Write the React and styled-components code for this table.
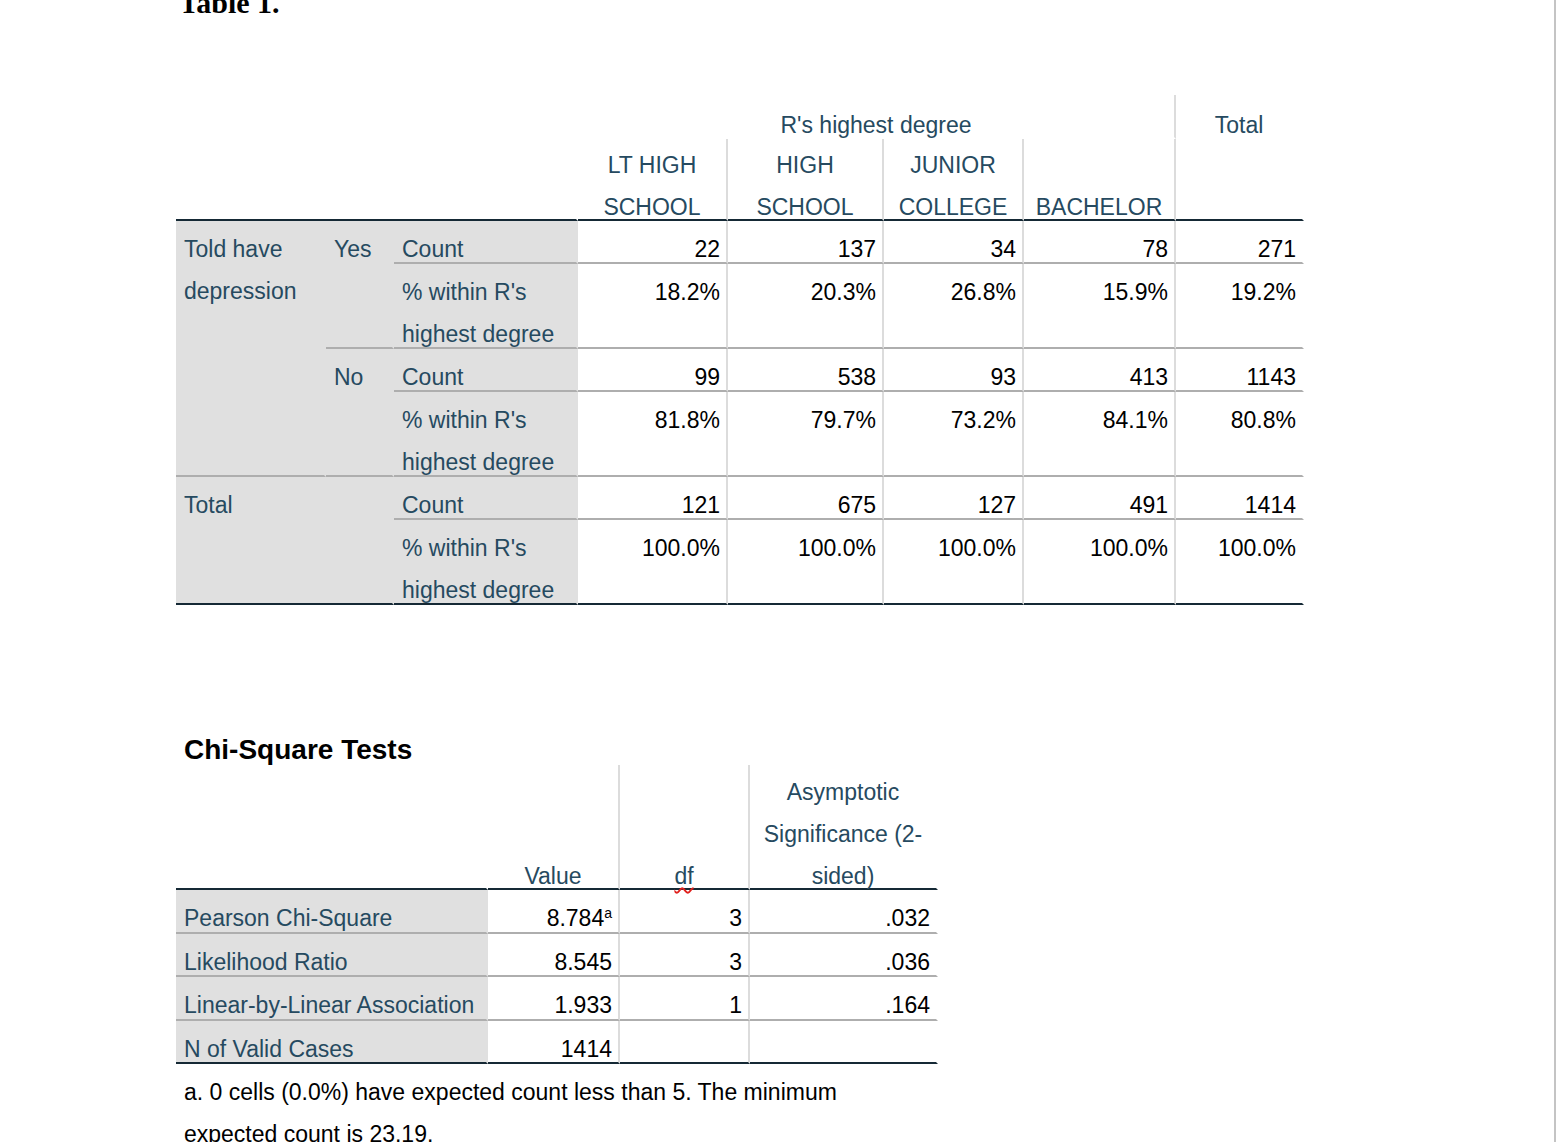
import React from "react";
import styled, { createGlobalStyle } from "styled-components";

const GlobalStyle = createGlobalStyle`
  html, body {
    margin: 0;
    background: #fff;
    overflow: hidden;
  }
`;

const rules = {
  gray: "#aeaeae",
  dark: "#152935",
};

const Page = styled.div`
  box-sizing: border-box;
  width: 1556px;
  height: 1142px;
  padding-left: 176px;
  border-right: 2px solid #c4c4c4;
  overflow: hidden;
  font-family: "Liberation Sans", Arial, sans-serif;
`;

const Caption = styled.h1`
  margin: -12px 0 0 3px;
  font: bold 30px/30px "Liberation Serif", "Times New Roman", serif;
  color: #000;
`;

const Grid = styled.div`
  display: grid;
  grid-template-columns: ${(p) => p.$cols};
  grid-template-rows: ${(p) => p.$rows};
  width: max-content;
  margin-top: ${(p) => p.$top || 0}px;
  font-size: 23px;
  line-height: 42px;
`;

const Cell = styled.div`
  grid-column: ${(p) => p.$c};
  grid-row: ${(p) => p.$r};
  box-sizing: border-box;
  min-width: 0;
  padding: 7px ${(p) => (p.$num ? "6px" : "8px")} 0 8px;
  background: ${(p) => (p.$shade ? "#e0e0e0" : "transparent")};
  border-bottom: 2px solid ${(p) => rules[p.$rule] || "transparent"};
  border-right: 2px solid ${(p) => (p.$sep ? "#dcdcdc" : "transparent")};
  color: ${(p) => (p.$num ? "#000" : "#264a60")};
  text-align: ${(p) => (p.$num ? "right" : "left")};
  white-space: ${(p) => (p.$num ? "nowrap" : "normal")};
  overflow: hidden;
`;

const HeadCell = styled(Cell)`
  display: flex;
  flex-direction: column;
  justify-content: ${(p) => (p.$bottom ? "flex-end" : "flex-start")};
  padding: 9px 8px 0;
  text-align: center;
  overflow: visible;
`;

const HeadText = styled.div`
  margin-bottom: ${(p) => (p.$bottom ? "-9px" : "0")};
`;

const Misspelt = styled.span`
  text-decoration: underline wavy #e0201c;
  text-decoration-thickness: 1.5px;
  text-underline-offset: 3px;
`;

const Sup = styled.sup`
  font-size: 14px;
  line-height: 0;
  vertical-align: 8px;
`;

const TestsTitle = styled.h2`
  margin: 129px 0 -1px 8px;
  font: bold 28px/32px "Liberation Sans", Arial, sans-serif;
  color: #000;
`;

const Footnote = styled.p`
  box-sizing: border-box;
  width: 762px;
  margin: 0;
  padding: 7px 8px 0;
  font-size: 23px;
  line-height: 42px;
  color: #000;
`;

const degrees = [
  ["LT HIGH", "SCHOOL"],
  ["HIGH", "SCHOOL"],
  ["JUNIOR", "COLLEGE"],
  ["BACHELOR"],
];

const crossRows = [
  { stat: "Count", vals: ["22", "137", "34", "78", "271"] },
  { stat: "% within R's highest degree", vals: ["18.2%", "20.3%", "26.8%", "15.9%", "19.2%"] },
  { stat: "Count", vals: ["99", "538", "93", "413", "1143"] },
  { stat: "% within R's highest degree", vals: ["81.8%", "79.7%", "73.2%", "84.1%", "80.8%"] },
  { stat: "Count", vals: ["121", "675", "127", "491", "1414"] },
  { stat: "% within R's highest degree", vals: ["100.0%", "100.0%", "100.0%", "100.0%", "100.0%"] },
];

const chiRows = [
  { label: "Pearson Chi-Square", value: "8.784", note: "a", df: "3", sig: ".032" },
  { label: "Likelihood Ratio", value: "8.545", df: "3", sig: ".036" },
  { label: "Linear-by-Linear Association", value: "1.933", df: "1", sig: ".164" },
  { label: "N of Valid Cases", value: "1414", df: "", sig: "" },
];

function Crosstab() {
  return (
    <Grid
      $top={77}
      $cols="150px 68px 184px 150px 156px 140px 152px 128px"
      $rows="44px 82px 43px 85px 43px 85px 43px 85px"
    >
      <HeadCell $c="1 / 4" $r="1 / 3" $rule="dark" />
      <HeadCell $c="4 / 8" $r="1" $sep>
        R's highest degree
      </HeadCell>
      <HeadCell $c="8" $r="1 / 3" $rule="dark">
        Total
      </HeadCell>
      {degrees.map((d, i) => (
        <HeadCell key={i} $c={`${i + 4}`} $r="2" $rule="dark" $sep $bottom>
          <HeadText $bottom>
            {d.map((line, j) => (
              <div key={j}>{line}</div>
            ))}
          </HeadText>
        </HeadCell>
      ))}

      <Cell $c="1" $r="3 / 7" $shade $rule="gray">
        Told have depression
      </Cell>
      <Cell $c="2" $r="3 / 5" $shade $rule="gray">
        Yes
      </Cell>
      <Cell $c="2" $r="5 / 7" $shade $rule="gray">
        No
      </Cell>
      <Cell $c="1 / 3" $r="7 / 9" $shade $rule="dark">
        Total
      </Cell>

      {crossRows.map((row, i) => {
        const r = `${i + 3}`;
        const rule = i === crossRows.length - 1 ? "dark" : "gray";
        return (
          <React.Fragment key={i}>
            <Cell $c="3" $r={r} $shade $rule={rule}>
              {row.stat}
            </Cell>
            {row.vals.map((v, j) => (
              <Cell key={j} $c={`${j + 4}`} $r={r} $rule={rule} $sep={j < 4} $num>
                {v}
              </Cell>
            ))}
          </React.Fragment>
        );
      })}
    </Grid>
  );
}

function ChiSquare() {
  return (
    <>
      <TestsTitle>Chi-Square Tests</TestsTitle>
      <Grid $cols="312px 132px 130px 188px" $rows="125px 44px 43px 44px 43px">
        <HeadCell $c="1" $r="1" $rule="dark" />
        <HeadCell $c="2" $r="1" $rule="dark" $sep $bottom>
          <HeadText $bottom>Value</HeadText>
        </HeadCell>
        <HeadCell $c="3" $r="1" $rule="dark" $sep $bottom>
          <HeadText $bottom>
            <Misspelt>df</Misspelt>
          </HeadText>
        </HeadCell>
        <HeadCell $c="4" $r="1" $rule="dark" $bottom>
          <HeadText $bottom>
            Asymptotic
            <br />
            Significance (2-
            <br />
            sided)
          </HeadText>
        </HeadCell>

        {chiRows.map((row, i) => {
          const r = `${i + 2}`;
          const rule = i === chiRows.length - 1 ? "dark" : "gray";
          return (
            <React.Fragment key={i}>
              <Cell $c="1" $r={r} $shade $rule={rule}>
                {row.label}
              </Cell>
              <Cell $c="2" $r={r} $rule={rule} $sep $num>
                {row.value}
                {row.note && <Sup>{row.note}</Sup>}
              </Cell>
              <Cell $c="3" $r={r} $rule={rule} $sep $num>
                {row.df}
              </Cell>
              <Cell $c="4" $r={r} $rule={rule} $num>
                {row.sig}
              </Cell>
            </React.Fragment>
          );
        })}
      </Grid>
      <Footnote>
        a. 0 cells (0.0%) have expected count less than 5. The minimum expected count is 23.19.
      </Footnote>
    </>
  );
}

export default function App() {
  return (
    <>
      <GlobalStyle />
      <Page>
        <Caption>Table 1.</Caption>
        <Crosstab />
        <ChiSquare />
      </Page>
    </>
  );
}
